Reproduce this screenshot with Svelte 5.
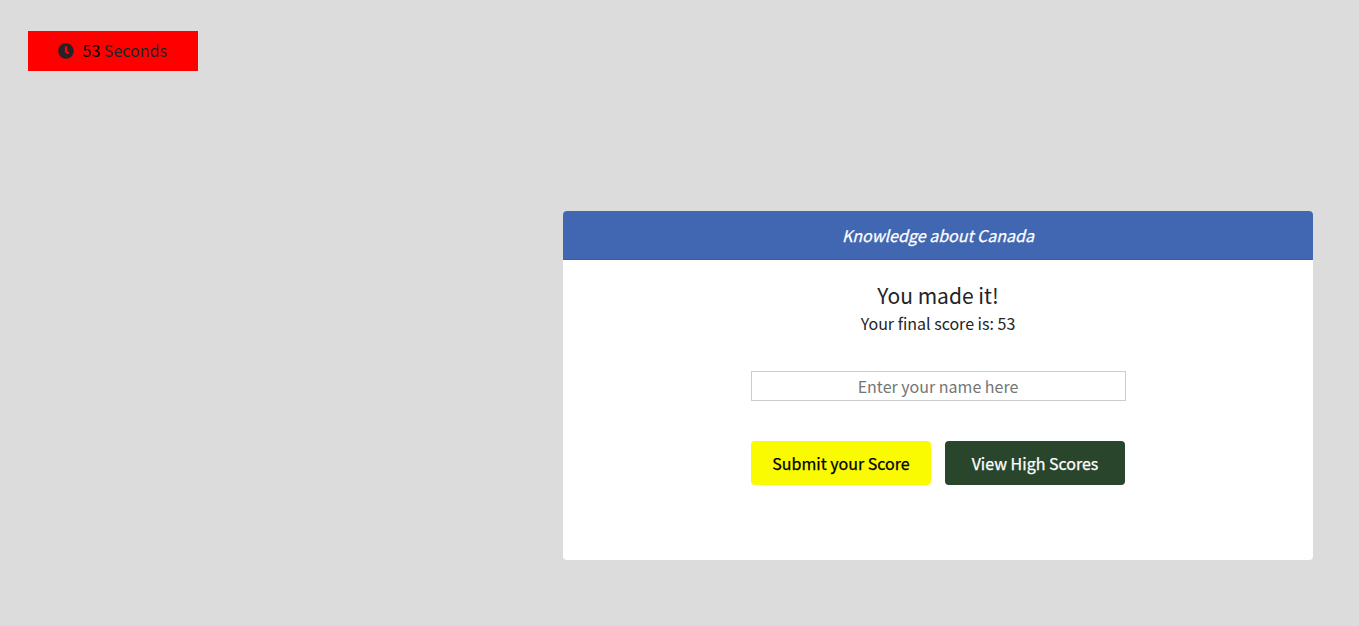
<script>
  let seconds = $state(53);
  let name = $state('');
</script>

<div class="page">
  <div class="timer">
    <svg class="clock" viewBox="0 0 512 512" aria-hidden="true">
      <path fill="currentColor" d="M256 8C119 8 8 119 8 256s111 248 248 248 248-111 248-248S393 8 256 8zm57.100 350.100L224.900 294c-3.100-2.300-4.900-5.900-4.900-9.700V116c0-6.600 5.400-12 12-12h48c6.600 0 12 5.400 12 12v137.700l63.500 46.200c5.400 3.900 6.500 11.400 2.600 16.800l-28.200 38.800c-3.900 5.300-11.400 6.500-16.800 2.600z" />
    </svg>
    <span class="count"><b>{seconds}</b> Seconds</span>
  </div>

  <main class="card">
    <header>Knowledge about Canada</header>
    <section>
      <h1>You made it!</h1>
      <p>Your final score is: {seconds}</p>
      <input type="text" placeholder="Enter your name here" bind:value={name} />
      <div class="actions">
        <button class="submit">Submit your Score</button>
        <button class="scores">View High Scores</button>
      </div>
    </section>
  </main>
</div>

<style>
  :global(body) {
    margin: 0;
    background: #dcdcdc;
  }

  .page {
    box-sizing: border-box;
    height: 626px;
    padding: 31px 46px 0 28px;
    overflow: hidden;
    font-family: "Noto Sans CJK SC", "Noto Sans", sans-serif;
    font-size: 16px;
    line-height: 24px;
    color: #212529;
  }

  .timer {
    display: flex;
    align-items: center;
    box-sizing: border-box;
    width: 170px;
    height: 40px;
    padding-left: 30px;
    gap: 8.500px;
    background: #ff0000;
  }

  .clock {
    width: 16px;
    height: 16px;
  }

  .count {
    padding-bottom: 2px;
  }

  .count b {
    font-weight: 400;
    color: #000;
  }

  .card {
    box-sizing: border-box;
    width: 750px;
    height: 349px;
    margin: 140px 0 0 auto;
    border-radius: 4px;
    background: #fff;
    overflow: hidden;
    text-align: center;
  }

  header {
    box-sizing: border-box;
    height: 49px;
    padding-top: 12px;
    border-bottom: 1px solid #3a5ba0;
    background: #4267b2;
    color: #fff;
    font-style: italic;
    -webkit-text-stroke: 0.25px currentColor;
  }

  section {
    display: flex;
    flex-direction: column;
    align-items: center;
    padding-top: 19px;
  }

  h1 {
    margin: 0;
    font-size: 21px;
    font-weight: 400;
    line-height: 32px;
  }

  p {
    margin: 0;
  }

  input {
    box-sizing: border-box;
    width: 375px;
    height: 30px;
    margin: 36px 0 0 1px;
    padding: 1px 3px 1px 2px;
    border: 1px solid #ccc;
    background: #fff;
    color: #212529;
    font: inherit;
    text-align: center;
    outline: none;
  }

  input::placeholder {
    color: #757575;
    opacity: 1;
  }

  .actions {
    display: flex;
    gap: 14px;
    margin-top: 40px;
  }

  button {
    width: 180px;
    height: 44px;
    padding: 0;
    border: 0;
    border-radius: 4px;
    font: inherit;
    -webkit-text-stroke: 0.25px currentColor;
  }

  .submit {
    background: #fafa00;
    color: #000;
  }

  .scores {
    background: #29462d;
    color: #fff;
  }
</style>
